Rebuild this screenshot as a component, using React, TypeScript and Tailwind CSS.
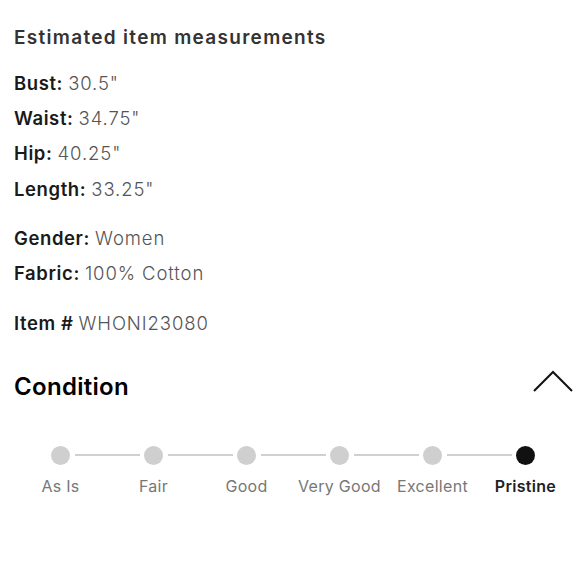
const STEPS = ['As Is', 'Fair', 'Good', 'Very Good', 'Excellent', 'Pristine'];
const ACTIVE = 5;

const MEASUREMENTS = [
  { label: 'Bust:', value: '30.5"' },
  { label: 'Waist:', value: '34.75"' },
  { label: 'Hip:', value: '40.25"' },
  { label: 'Length:', value: '33.25"' },
];

const DETAILS = [
  { label: 'Gender:', value: 'Women' },
  { label: 'Fabric:', value: '100% Cotton' },
];

function Row({ label, value }: { label: string; value: string }) {
  return (
    <div className="h-[35.3px] flex items-center text-[18.5px] tracking-[0.6px]">
      <span className="font-semibold text-[#1a1a1a]">{label}</span>
      <span className="ml-[5px] font-light text-[#555] tracking-[0.9px]">{value}</span>
    </div>
  );
}

export default function App() {
  return (
    <div
      className="w-[580px] h-[580px] bg-white px-[14px] pt-[26px]"
      style={{ fontFamily: 'Inter, "Liberation Sans", Arial, sans-serif' }}
    >
      <h2 className="text-[19px] leading-[24px] font-semibold text-[#333] tracking-[1.3px]">
        Estimated item measurements
      </h2>

      <div className="mt-[16px]">
        {MEASUREMENTS.map((m) => (
          <Row key={m.label} {...m} />
        ))}
      </div>

      <div className="mt-[14px]">
        {DETAILS.map((d) => (
          <Row key={d.label} {...d} />
        ))}
      </div>

      <div className="mt-[14px]">
        <Row label="Item #" value="WHONI23080" />
      </div>

      {/* Condition header */}
      <div className="mt-[31px] flex items-center justify-between">
        <h3 className="text-[24px] leading-[30px] font-semibold text-black tracking-[0.3px]">
          Condition
        </h3>
        <svg width="42" height="24" viewBox="0 0 42 24" className="mr-[-8px] mt-[-12px]">
          <polyline points="2,22 21,3 40,22" fill="none" stroke="#111" strokeWidth="2" />
        </svg>
      </div>

      {/* Stepper */}
      <div className="mt-[43px] grid grid-cols-6 w-[558px]">
        {STEPS.map((s, i) => (
          <div key={s} className="flex flex-col items-center">
            <div className="relative w-full h-[20px] flex items-center justify-center">
              {i > 0 && (
                <div className="absolute left-0 right-1/2 mr-[14px] top-1/2 h-[2px] -translate-y-1/2 bg-[#d0d0d0]" />
              )}
              {i < STEPS.length - 1 && (
                <div className="absolute right-0 left-1/2 ml-[14px] top-1/2 h-[2px] -translate-y-1/2 bg-[#d0d0d0]" />
              )}
              <div
                className={`w-[19px] h-[19px] rounded-full ${
                  i === ACTIVE ? 'bg-[#111]' : 'bg-[#cfcfcf]'
                }`}
              />
            </div>
            <span
              className={`mt-[11px] text-[16px] leading-[20px] tracking-[0.3px] ${
                i === ACTIVE ? 'font-semibold text-[#222]' : 'text-[#777]'
              }`}
            >
              {s}
            </span>
          </div>
        ))}
      </div>
    </div>
  );
}
